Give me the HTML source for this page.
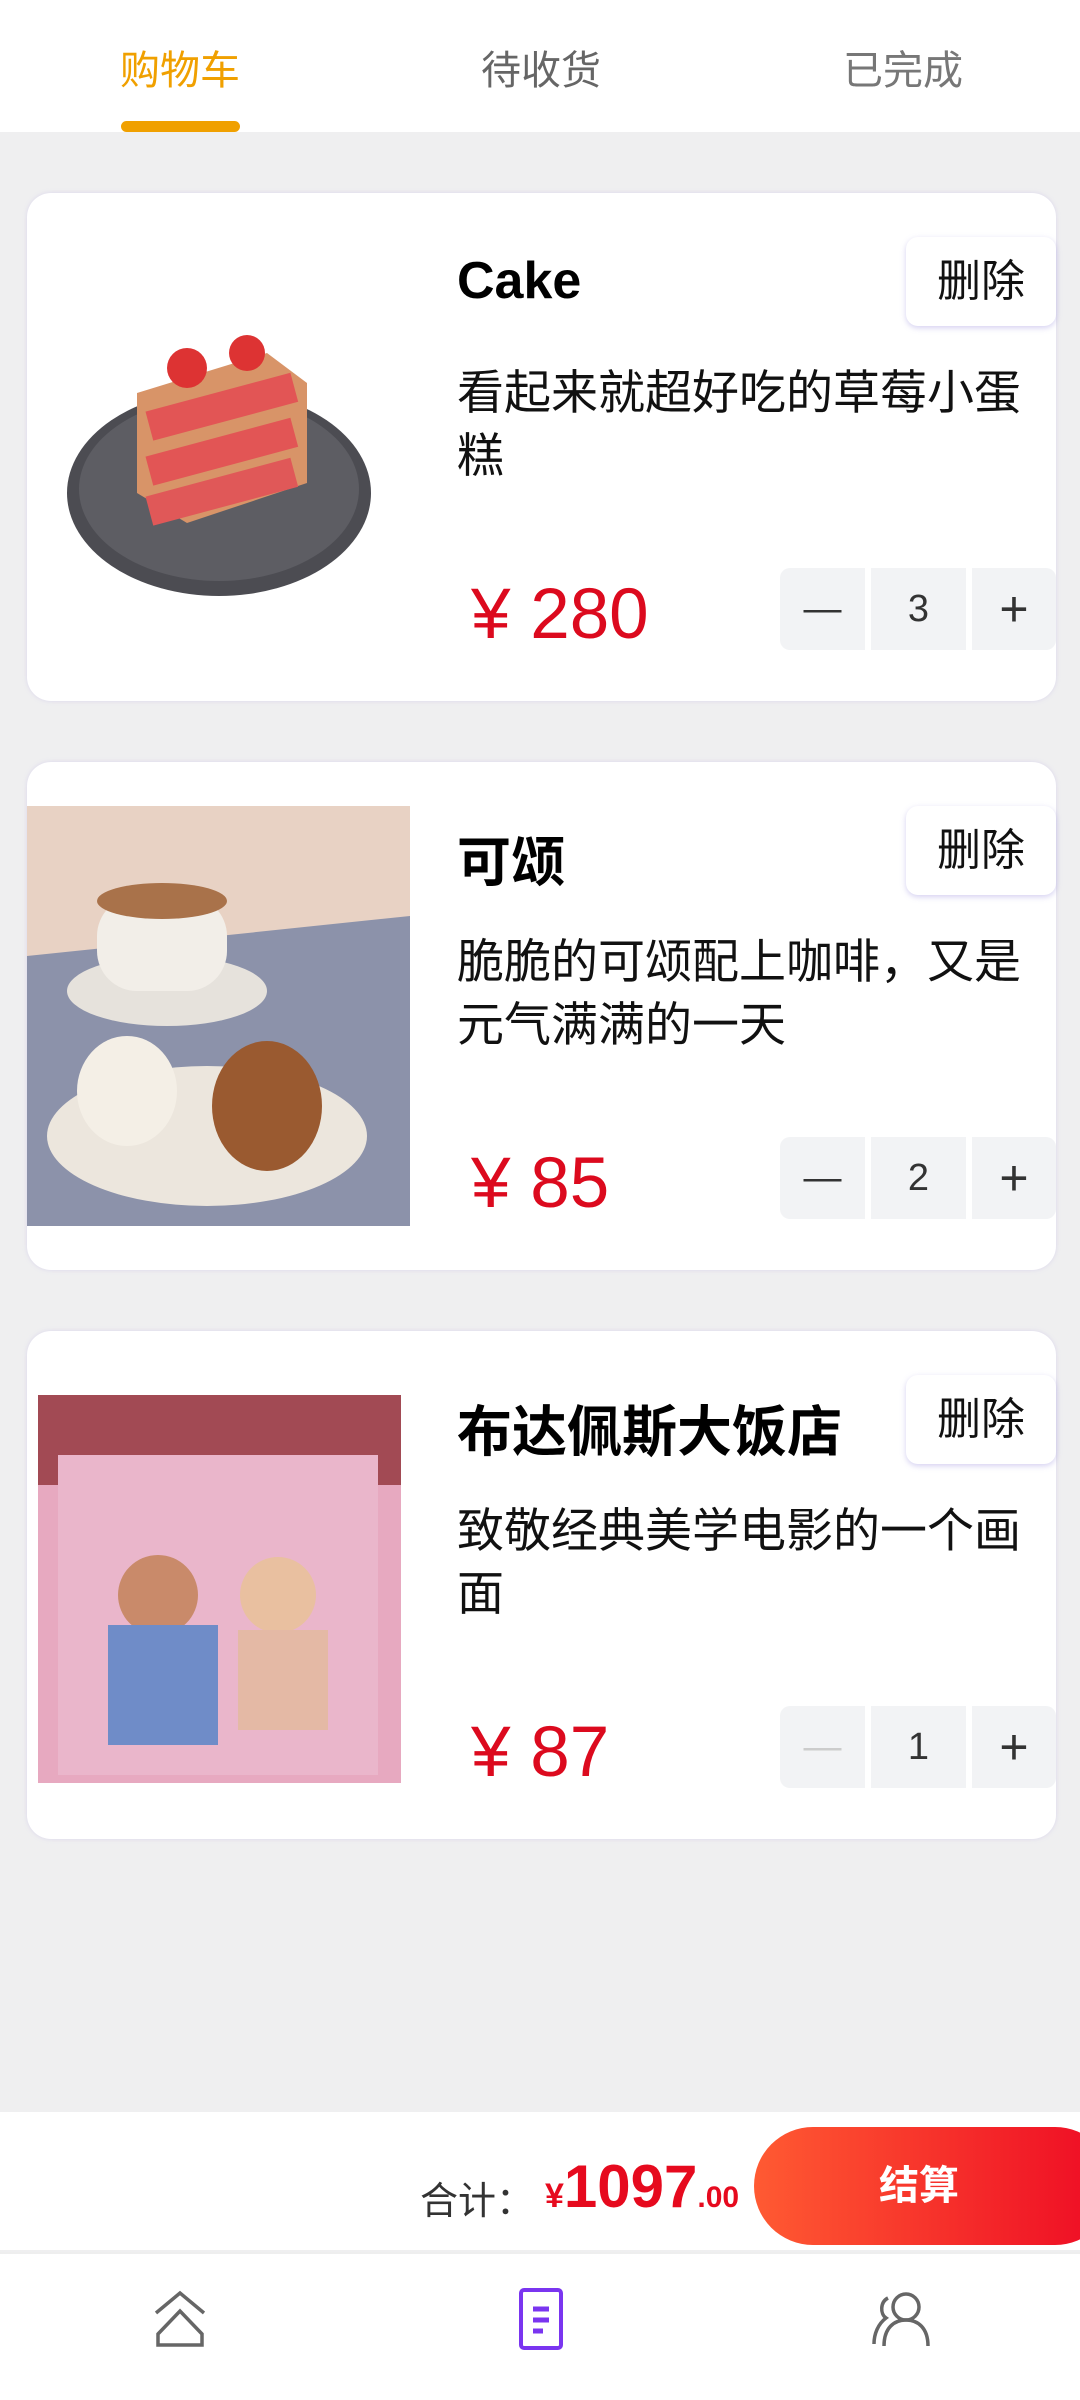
<!DOCTYPE html>
<html><head><meta charset="utf-8"><style>
*{margin:0;padding:0;box-sizing:border-box}
body{width:1080px;height:2400px;background:#efeff0;font-family:"Liberation Sans","Noto Sans CJK SC",sans-serif;position:relative;overflow:hidden}
.hdr{position:absolute;left:0;top:0;width:1080px;height:132px;background:#fff}
.tab{position:absolute;top:38px;font-size:40px;width:240px;text-align:center;color:#555;margin-left:-120px}
.ul{position:absolute;left:121px;top:121px;width:119px;height:11px;background:#f0a000;border-radius:6px}
.card{position:absolute;left:27px;width:1029px;height:508px;background:#fff;border-radius:24px;box-shadow:0 0 4px rgba(180,170,230,.35)}
.img{position:absolute;left:0;top:0;width:383px;height:508px;overflow:hidden;border-radius:24px 0 0 24px}
.title{position:absolute;left:430px;top:58px;font-size:52px;font-weight:bold;color:#000}
.del{position:absolute;right:0;top:44px;width:150px;height:89px;background:#fff;border-radius:12px;box-shadow:0 2px 6px rgba(150,140,220,.4);font-size:44px;text-align:center;line-height:89px;color:#111}
.desc{position:absolute;left:430px;top:168px;width:600px;font-size:47px;line-height:63px;color:#111}
.price{position:absolute;left:444px;top:381px;font-size:71px;color:#dc0a1e}
.step{position:absolute;top:375px;height:82px;background:#f2f3f5;text-align:center;line-height:82px;font-size:38px;color:#333}
.bar{position:absolute;left:0;top:2112px;width:1080px;height:138px;background:#fff}
.nav{position:absolute;left:0;top:2252px;width:1080px;height:148px;background:#fff;border-top:2px solid #eee}
</style></head><body>
<div class="hdr">
<div class="tab" style="left:180px;color:#f0a000">购物车</div>
<div class="tab" style="left:541px;color:#666">待收货</div>
<div class="tab" style="left:903px;color:#777">已完成</div>
<div class="ul"></div>
</div>

<div class="card" style="top:193px">
<div class="img"><svg width="383" height="508">
<ellipse cx="192" cy="300" rx="152" ry="103" fill="#4c4c52"/><ellipse cx="192" cy="296" rx="140" ry="92" fill="#5d5d63"/>
<polygon points="110,200 240,160 280,190 280,290 160,330 110,300" fill="#d89468"/>
<rect x="120" y="200" width="150" height="30" fill="#e25555" transform="rotate(-15 190 215)"/>
<rect x="120" y="245" width="150" height="30" fill="#e25555" transform="rotate(-15 190 260)"/>
<rect x="120" y="285" width="150" height="30" fill="#e05858" transform="rotate(-15 190 300)"/>
<circle cx="160" cy="175" r="20" fill="#d33"/><circle cx="220" cy="160" r="18" fill="#d33"/>
</svg></div>
<div class="title">Cake</div><div class="del">删除</div>
<div class="desc">看起来就超好吃的草莓小蛋糕</div>
<div class="price">¥ 280</div>
<div class="step" style="left:753px;width:85px;border-radius:10px 0 0 10px">—</div>
<div class="step" style="left:844px;width:95px">3</div>
<div class="step" style="left:945px;width:84px;border-radius:0 10px 10px 0;font-size:50px">+</div>
</div>

<div class="card" style="top:762px">
<div class="img" style="top:44px;height:420px;border-radius:0"><svg width="383" height="420">
<rect width="383" height="420" fill="#e8d2c4"/><polygon points="0,150 383,110 383,420 0,420" fill="#8c92aa"/>
<ellipse cx="140" cy="185" rx="100" ry="35" fill="#e6e2dc"/><rect x="70" y="90" width="130" height="95" rx="40" fill="#f2eee8"/>
<ellipse cx="135" cy="95" rx="65" ry="18" fill="#a9724a"/>
<ellipse cx="180" cy="330" rx="160" ry="70" fill="#ece6dd"/><ellipse cx="100" cy="285" rx="50" ry="55" fill="#f4efe6"/>
<ellipse cx="240" cy="300" rx="55" ry="65" fill="#9a5a30"/>
</svg></div>
<div class="title" style="font-size:54px;top:56px">可颂</div><div class="del">删除</div>
<div class="desc">脆脆的可颂配上咖啡，又是元气满满的一天</div>
<div class="price">¥ 85</div>
<div class="step" style="left:753px;width:85px;border-radius:10px 0 0 10px">—</div>
<div class="step" style="left:844px;width:95px">2</div>
<div class="step" style="left:945px;width:84px;border-radius:0 10px 10px 0;font-size:50px">+</div>
</div>

<div class="card" style="top:1331px">
<div class="img" style="left:11px;top:64px;width:363px;height:388px;border-radius:0"><svg width="363" height="388">
<rect width="363" height="388" fill="#e7a9c0"/><rect width="363" height="90" fill="#a24a54"/>
<rect x="20" y="60" width="320" height="320" fill="#eab6cb"/>
<circle cx="120" cy="200" r="40" fill="#c98a6a"/><rect x="70" y="230" width="110" height="120" fill="#6f8cc8"/>
<circle cx="240" cy="200" r="38" fill="#e9c0a0"/><rect x="200" y="235" width="90" height="100" fill="#e4b9a5"/>
</svg></div>
<div class="title" style="font-size:55px;top:56px">布达佩斯大饭店</div><div class="del">删除</div>
<div class="desc">致敬经典美学电影的一个画面</div>
<div class="price">¥ 87</div>
<div class="step" style="left:753px;width:85px;border-radius:10px 0 0 10px;color:#ccc">—</div>
<div class="step" style="left:844px;width:95px">1</div>
<div class="step" style="left:945px;width:84px;border-radius:0 10px 10px 0;font-size:50px">+</div>
</div>

<div class="bar">
<div style="position:absolute;left:420px;top:58px;font-size:38px;color:#333">合计：</div>
<div style="position:absolute;left:545px;top:40px;color:#e60a1e;font-weight:bold;white-space:nowrap"><span style="font-size:34px">¥</span><span style="font-size:60px">1097</span><span style="font-size:30px">.00</span></div>
<div style="position:absolute;left:754px;top:15px;width:360px;height:118px;border-radius:59px;background:linear-gradient(90deg,#ff5a32,#ee0a24);color:#fff;font-size:40px;font-weight:bold;line-height:118px;padding-left:125px">结算</div>
</div>

<div class="nav">
<svg style="position:absolute;left:152px;top:35px" width="56" height="60" viewBox="0 0 56 60" fill="none" stroke="#666" stroke-width="3.5"><path d="M4 24 L28 4 L52 24"/><path d="M6 45 L28 22 L50 45 V56 H6 Z"/></svg>
<svg style="position:absolute;left:518px;top:33px" width="46" height="64" viewBox="0 0 46 64" fill="none" stroke="#7a35f0" stroke-width="4"><rect x="3" y="3" width="40" height="58" rx="3"/><path d="M15 22h16M15 33h16M15 44h10" stroke-width="5"/></svg>
<svg style="position:absolute;left:870px;top:36px" width="62" height="58" viewBox="0 0 62 58" fill="none" stroke="#666" stroke-width="3.5"><circle cx="36" cy="17" r="13"/><path d="M14 56 C14 38 24 30 36 30 C48 30 58 38 58 56"/><path d="M18 8 C10 12 10 24 16 28 C8 34 4 44 4 54"/></svg>
</div>
</body></html>
